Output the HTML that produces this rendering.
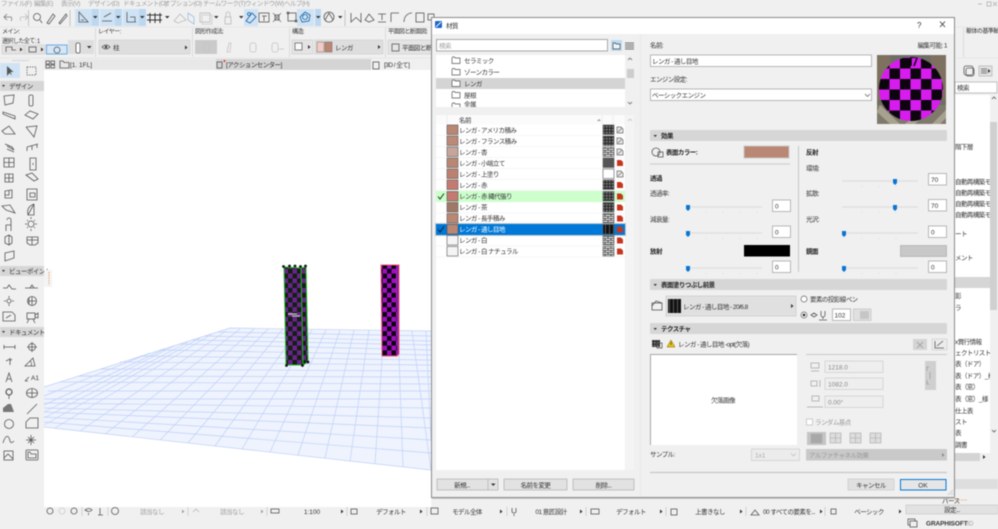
<!DOCTYPE html>
<html lang="ja"><head><meta charset="utf-8"><title>材質</title>
<style>
html,body{margin:0;padding:0;background:#f0f0f0;overflow:hidden}
svg{display:block;filter:blur(.4px)}
text{font-family:"Liberation Sans","Noto Sans CJK JP",sans-serif;font-size:6.5px;letter-spacing:-.55px;fill:#333}
.n{letter-spacing:0}
.b{font-weight:700;fill:#222}
.g{fill:#a0a0a0}
.i{fill:none;stroke:#555;stroke-width:.8}
.f{fill:#fff;stroke:#a8a8a8;stroke-width:.8}
.sl{stroke:#e0e0e0;stroke-width:1.6}
.th{fill:#0a74d4}
.sh{fill:#d6d6d6}
</style></head><body>
<svg width="998" height="529" viewBox="0 0 998 529" xmlns="http://www.w3.org/2000/svg">
<defs>
<pattern id="c1" width="9" height="9.600" patternUnits="userSpaceOnUse"><rect width="9" height="9.600" fill="#6b2290"/><rect width="4.500" height="4.800" fill="#12200f"/><rect x="4.500" y="4.800" width="4.500" height="4.800" fill="#12200f"/></pattern>
<pattern id="c2" width="9" height="9.600" patternUnits="userSpaceOnUse"><rect width="9" height="9.600" fill="#a010c0"/><rect width="4.500" height="4.800" fill="#0c0410"/><rect x="4.500" y="4.800" width="4.500" height="4.800" fill="#0c0410"/></pattern>
<pattern id="c3" width="21" height="21" patternUnits="userSpaceOnUse" patternTransform="translate(900 79)"><rect width="21" height="21" fill="#d81cf0"/><rect width="10.500" height="10.500" fill="#0c050e"/><rect x="10.500" y="10.500" width="10.500" height="10.500" fill="#0c050e"/></pattern>
<pattern id="d" width="3" height="3" patternUnits="userSpaceOnUse"><rect width="3" height="3" fill="#333"/><rect width="1.500" height="1.500" fill="#888"/></pattern>
<pattern id="br" width="6" height="4" patternUnits="userSpaceOnUse"><rect width="6" height="4" fill="#eee"/><path d="M0 .5H6M0 2.500H6M2 0V2M5 2V4" stroke="#333" stroke-width=".8"/></pattern>
<pattern id="th" width="4" height="11" patternUnits="userSpaceOnUse"><rect width="4" height="11" fill="#111"/><rect x="1" width="1" height="11" fill="#555"/></pattern>
<clipPath id="rp"><rect x="955" y="95" width="35" height="358"/></clipPath>
<g id="fo"><path d="M0 2V7H8V1.500H3.200L2.500 .5H.5L0 2Z" fill="#fff" stroke="#555" stroke-width=".7"/></g>
<g id="red"><path d="M0 0H4L6 2V6H0Z" fill="#c8351e"/></g>
<g id="gry"><path d="M0 0H4L6 2V6H0Z" fill="#e8e8e8" stroke="#666" stroke-width=".7"/><path d="M1 5L5 1" stroke="#666" stroke-width=".6"/></g>
<path id="ar" d="M0 0L2.500 2L0 4Z" fill="#333"/>
<path id="da" d="M0 0H4.500L2.250 2.500Z" fill="#333"/>
</defs>

<!-- app chrome -->
<rect width="998" height="529" fill="#f0f0f0"/>
<g>
<text x="1" y="5.500" class="g">ファイル(F)</text><text x="34" y="5.500" class="g">編集(E)</text><text x="61" y="5.500" class="g">表示(V)</text><text x="88" y="5.500" class="g">デザイン(D)</text><text x="123" y="5.500" class="g">ドキュメント(O)</text><text x="164" y="5.500" class="g">オプション(O)</text><text x="203" y="5.500" class="g">チームワーク(T)</text><text x="245" y="5.500" class="g">ウィンドウ(W)</text><text x="284" y="5.500" class="g">ヘルプ(H)</text>
<path d="M978 4H982M987 2H991V6H987ZM993 2L997 6M997 2L993 6" stroke="#aaa" stroke-width=".7" fill="none"/>
</g>

<!-- toolbar -->
<rect x="75" y="9" width="17" height="17" fill="#cfe3f5"/><rect x="92" y="9" width="7" height="17" fill="#bcd8f0"/>
<rect x="100" y="9" width="15" height="17" fill="#cfe3f5"/><rect x="115" y="9" width="7" height="17" fill="#bcd8f0"/>
<rect x="123" y="9" width="16" height="17" fill="#cfe3f5"/><rect x="139" y="9" width="7" height="17" fill="#bcd8f0"/>
<rect x="244" y="9" width="14" height="17" fill="#cfe3f5"/>
<rect x="297" y="9" width="17" height="17" fill="#cfe3f5"/><rect x="315" y="9" width="6" height="17" fill="#bcd8f0"/>
<g class="i">
<path d="M7 14L4 17L7 20M4 17H11A3 3 0 0 1 11 21" stroke="#777"/>
<path d="M25 14L28 17L25 20M28 17H21A3 3 0 0 0 21 21" stroke="#bbb"/>
<path d="M28.500 10V26M70 10V26M345 10V26" stroke="#bbb"/>
<circle cx="37" cy="17" r="3.500"/><path d="M40 20L42 23"/>
<path d="M47 23L53 14L55 16L49 24ZM59 23L66 14L67 16L60 24Z"/>
<path d="M79 22L79 12L88 22ZM81 20H84"/>
<path d="M102 21H112M104 17L111 13"/>
<path d="M127 12V22H136M130 17H135V22"/>
<path d="M150 13V23M155 13V23M160 13V23M147 15H162M147 20H162" stroke="#333" stroke-width="1"/>
<path d="M174 21L180 14L186 20L178 23Z" stroke="#bbb"/><path d="M188 13L194 17V24L188 20Z" stroke="#9bc0e5"/>
<rect x="200" y="13" width="10" height="9" stroke="#bbb"/><rect x="202" y="15" width="10" height="9" stroke="#ccc"/>
<rect x="225" y="17" width="6" height="7" stroke="#bbb"/><path d="M226 17V14A2 2 0 0 1 230 14V17" stroke="#bbb"/>
<path d="M246 21L252 13L256 17L250 23Z" stroke="#16609e"/><circle cx="249" cy="14" r="1.500" stroke="#16609e"/>
<rect x="259" y="13" width="10" height="9"/><path d="M262 16H267M264 16V21"/>
<path d="M273 13L281 22M281 13L273 22" stroke="#777"/><rect x="275" y="15" width="4" height="5"/>
<rect x="288" y="13" width="8" height="8"/><circle cx="288" cy="13" r="1"/><circle cx="296" cy="21" r="1"/>
<path d="M300 17L305 12L310 15L309 21L302 22Z" stroke="#16609e"/><circle cx="305" cy="17" r="2.500" stroke="#16609e"/>
<circle cx="329" cy="17" r="5"/><path d="M325 20L329 13L333 20"/>
<path d="M351 13V22L356 17.500L361 22V13" /><path d="M365 20L369 14L374 20L369 22Z"/>
<path d="M378 14H386M382 14V20M378 22H386"/><path d="M391 13H399M391 13V22"/><path d="M404 22C404 16 408 13 412 13"/><rect x="416" y="13" width="8" height="9"/><rect x="428" y="14" width="6" height="6"/>
</g>
<use href="#da" x="93" y="16"/><use href="#da" x="116" y="16"/><use href="#da" x="140" y="16"/><use href="#da" x="165" y="16"/><use href="#da" x="214" y="16"/><use href="#da" x="239" y="16"/><use href="#da" x="316" y="16"/><use href="#da" x="338" y="16"/>

<!-- info box -->
<rect x="0" y="27" width="998" height="31" fill="#f0f0f0"/>
<path d="M0 27H998M0 58H998" stroke="#e2e2e2" stroke-width=".8"/>
<path d="M95.500 28V57M192.500 28V57M289.500 28V57M385.500 28V57M963.500 28V57" stroke="#d8d8d8" stroke-width=".8"/>
<text x="2" y="33.500" style="font-size:6px">メイン:</text><text x="98" y="33.500" style="font-size:6px">レイヤー:</text><text x="195" y="33.500" style="font-size:6px">図形作成法:</text><text x="292" y="33.500" style="font-size:6px">構造:</text><text x="388" y="33.500" style="font-size:6px">平面図と断面図:</text><text x="966" y="33" style="font-size:6px">躯体の基準軸:</text>
<text x="2" y="43" style="font-size:6px">選択した全て: 1</text>
<rect x="2" y="45" width="22" height="9" fill="#e2e2e2" stroke="#ccc" stroke-width=".6"/><rect x="25" y="45" width="20" height="9" fill="#e2e2e2" stroke="#ccc" stroke-width=".6"/><rect x="46.500" y="45" width="20.500" height="9" fill="#d5e7f7" stroke="#3d8fd8" stroke-width=".7"/>
<rect x="68" y="40" width="26" height="14" fill="#dedede"/>
<g class="i"><path d="M6 52V47H12V50H16"/><rect x="29" y="47" width="7" height="5"/><circle cx="57" cy="50" r="3"/><rect x="76" y="43" width="4" height="10" rx="1.500" fill="#fff"/></g>
<use href="#ar" x="20" y="47.500"/><use href="#ar" x="41" y="47.500"/><use href="#da" x="87" y="46"/>
<rect x="99" y="40" width="91" height="14" fill="#dedede" stroke="#ccc" stroke-width=".6"/>
<path d="M102 47Q106 43 110 47Q106 51 102 47Z" class="i"/><circle cx="106" cy="47" r="1.200" fill="#333"/>
<text x="113" y="50">柱</text><use href="#ar" x="185" y="45.500"/>
<rect x="195" y="40" width="22" height="14" fill="#cacaca"/>
<g class="i" style="stroke:#c4c4c4"><rect x="204" y="43" width="5" height="9" rx="2"/><path d="M227 52L229 43H231L230 52Z"/><rect x="250" y="43" width="6" height="9" rx="2"/><rect x="272" y="43" width="6" height="9" rx="2"/><path d="M279 49H284"/></g>
<rect x="292" y="40" width="21" height="14" fill="#e4e4e4" stroke="#ccc" stroke-width=".6"/><rect x="295" y="43" width="7" height="7" fill="#fafafa" stroke="#555" stroke-width=".7"/><use href="#ar" x="308" y="45"/>
<rect x="315" y="40" width="68" height="14" fill="#dedede" stroke="#ccc" stroke-width=".6"/><rect x="317" y="42" width="7" height="10" fill="#f2cbc4" stroke="#555" stroke-width=".4"/><rect x="325" y="42" width="7" height="10" fill="#b98773" stroke="#555" stroke-width=".4"/><text x="335" y="50">レンガ</text><use href="#ar" x="378" y="45"/>
<rect x="388" y="40" width="50" height="14" fill="#e4e4e4" stroke="#ccc" stroke-width=".6"/><rect x="392" y="44" width="7" height="7" class="i"/><text x="402" y="50">平面図と断面</text>

<!-- view tabs -->
<rect x="44" y="59" width="172" height="11" fill="#e8e8e8"/><rect x="216" y="59" width="155" height="11" fill="#d4d4d4"/><rect x="371" y="59" width="60" height="11" fill="#f0f0f0"/>
<g class="i"><rect x="46" y="61" width="3.500" height="3"/><rect x="51" y="61" width="3.500" height="3"/><rect x="46" y="65" width="3.500" height="3"/><rect x="51" y="65" width="3.500" height="3"/><path d="M60 68V61H63L64 62.500H69V68Z"/><rect x="217" y="62" width="5" height="6"/><rect x="373" y="62" width="6" height="7"/></g>
<circle cx="224.500" cy="61" r="1" fill="#e03020"/>
<text x="70" y="67" class="n">[1. 1FL]</text><text x="226" y="67">[アクションセンター]</text><text x="384" y="67">[3D / 全て]</text>

<!-- canvas -->
<rect x="44" y="70" width="387" height="437" fill="#fff"/>
<polygon points="44,387 230,328 431,331 431,470 44,427" fill="#eef3fe"/>
<g stroke="#bfd0f6" stroke-width=".7" fill="none">
<path d="M44 387L230 328L431 331M44 427L431 470M44 422L431 453M44 417L431 440M44 412L431 428M44 408L431 418M44 403L431 408M44 399L431 399M48 391L431 391M60 382L431 384M78 376L431 377M100 369L431 371M120 362L431 365M140 356L431 360M160 350L431 355M180 344L431 350M192 340L431 345M205 336L431 341M218 332L431 336"/>
<path d="M44 396L150 353M44 405L165 349M44 412L176 345M44 418L188 342M44 425L200 338M55 428L212 334M80 431L226 331M105 434L240 329M132 437L254 329M160 440L268 329M188 443L283 329M215 446L298 330M242 449L312 330M270 452L326 330M298 455L340 330M325 458L354 330M350 461L369 330M375 464L384 330M403 467L398 330M431 470L412 331M431 440L426 331"/>
</g>

<!-- left column -->
<polygon points="284,267 301,268 303,365 286,365" fill="url(#c1)"/>
<polygon points="301,268 306,267 308,362 303,365" fill="url(#c1)"/>
<path d="M284 267L301 268L303 365L286 365ZM301 268L306 267L308 362L303 365" fill="none" stroke="#18c018" stroke-width="1"/>
<g fill="#111"><circle cx="283.500" cy="266.500" r="1.400"/><circle cx="289.500" cy="266" r="1.400"/><circle cx="295" cy="266" r="1.400"/><circle cx="300.500" cy="266.500" r="1.400"/><circle cx="305.500" cy="266" r="1.400"/><circle cx="286.500" cy="365.500" r="1.400"/><circle cx="302.500" cy="365.500" r="1.400"/><circle cx="308" cy="362" r="1.400"/></g>
<path d="M288 314H297M292 316H300" stroke="#ccc" stroke-width="1.200"/>
<!-- right column -->
<polygon points="381,265 396,265 397,356 382,356" fill="url(#c2)"/>
<polygon points="396,265 399,265 399,354 397,356" fill="#901aa8"/>
<path d="M381 265L399 265L399 354L397 356L382 356Z" fill="none" stroke="#f05468" stroke-width=".9"/>

<!-- left toolbox -->
<rect x="0" y="59" width="44" height="448" fill="#f0f0f0"/>
<path d="M12 60.500H29" stroke="#ccc" stroke-width=".8"/>
<rect x="0" y="63" width="20" height="15" fill="#cfe3f5"/>
<path d="M7 66L7 76L9.500 73L12 75.500L10.500 72H13.500Z" fill="#555"/>
<rect x="27" y="67" width="9" height="8" fill="none" stroke="#555" stroke-width=".7" stroke-dasharray="1.500 1"/>
<rect x="0" y="81" width="44" height="10" class="sh"/><path d="M2 85H5L3.500 87Z" fill="#333"/><text x="9" y="88.500">デザイン</text>
<rect x="0" y="266" width="44" height="10" class="sh"/><path d="M2 270H5L3.500 272Z" fill="#333"/><text x="9" y="273.500">ビューポイント</text>
<rect x="0" y="327" width="44" height="10" class="sh"/><path d="M2 331H5L3.500 333Z" fill="#333"/><text x="9" y="334.500">ドキュメント</text>
<rect x="44" y="270" width="8" height="17" fill="#f4f4f4"/><path d="M49 272V285" stroke="#e8a060" stroke-width=".9" stroke-dasharray="1.500 1"/>
<g class="i">
<path d="M4 96L14 95L13 103L5 105Z"/><rect x="29" y="95" width="4" height="11" rx="1.500"/>
<path d="M3 112L15 116V119L3 114Z"/><path d="M25 115L30 111L38 114L33 119Z"/>
<path d="M2 131L9 126L15 134L5 134Z"/><path d="M26 127L37 126L34 137L30 132L26 127"/>
<path d="M5 144L12 147L14 150L7 146M7 149L14 152"/><path d="M27 147L38 144M27 151V147M32 150V146M37 148V144"/>
<path d="M4 158H14V167H4ZM9 158V167M4 162.500H14"/><path d="M30 158H36V170H30ZM33 163V165"/>
<path d="M5 174H13V182H5ZM9 174V182M5 178H13"/><path d="M26 175L32 173L38 179L34 181L30 178Z"/>
<path d="M5 191L12 190V198L5 198ZM9 190V195H5"/><path d="M27 189H37V200H27ZM30 193H35V197H30Z"/>
<path d="M2 206L10 205L15 213L6 210Z"/><path d="M28 215L34 204V215ZM28 215Q26 207 34 204"/>
<path d="M7 220A2 2 0 0 1 11 220V225H6V231M11 225V231"/><circle cx="31" cy="224" r="3"/><path d="M31 217V219M31 229V231M25 224H27M35 224H37M27 220L28 221M34 227L35 228M27 228L28 227M34 221L35 220"/>
<path d="M5 237L9 235L12 237V243L9 245L5 243ZM9 235V245"/><path d="M27 237H38V243L35 245H30L27 243ZM27 240H38M32 237V245"/>
<path d="M5 253L14 251V258L5 261Z"/>
<path d="M3 288H7L9 285L12 289H16" /><path d="M25 288H38M30 288L32 285L34 288"/>
<circle cx="9" cy="301" r="2"/><path d="M9 296V298M9 304V306M4 301H6M12 301H14"/><circle cx="32" cy="301" r="4.500"/><path d="M29 298V304M32 297V305M28 301H36"/>
<path d="M3 312H12L15 315V321H3ZM6 318L11 315"/><rect x="27" y="313" width="8" height="6"/><path d="M35 315L38 313V318L35 317M29 319L27 323M33 319L35 323"/>
<path d="M4 347H15M4 345V349M15 345V349"/><circle cx="32" cy="347" r="3.500"/><path d="M27 347H37M32 342V352"/>
<path d="M6 361L10 359M10 365V358M10 361L12 359"/><path d="M25 366L33 358L35 366ZM31 366A4 4 0 0 0 30 361"/>
<path d="M6 382L9 373L12 382M7 379H11"/><path d="M25 381L29 377M25 381H28"/>
<circle cx="9" cy="392" r="3" stroke-width="1.200"/><path d="M9 395V399"/><ellipse cx="32" cy="393" rx="5.500" ry="4.500"/><path d="M27 393H37M32 389V398"/>
<path d="M27 414L37 404"/><circle cx="9" cy="424" r="4.500"/><path d="M26 428V422L30 418H38V428Z"/>
<path d="M3 443C6 433 9 436 10 441C11 444 13 442 14 441"/><path d="M31 435V445M26 440H36M28 437L34 443M34 437L28 443"/>
<rect x="4" y="451" width="9" height="9"/><path d="M4 458L8 454L13 459"/><rect x="26" y="450" width="12" height="10" rx="1"/><path d="M28 458H36V454H31L30 452H28Z"/>
</g>
<path d="M3 414V408L8 404H11L14 412H3Z" fill="#777"/>
<text x="31" y="380" class="n">A1</text>

<!-- nav bar -->
<rect x="44" y="507" width="862" height="9" fill="#f0f0f0"/>
<g class="i">
<circle cx="50" cy="511" r="3"/><circle cx="62" cy="511" r="3" stroke="#ccc"/><circle cx="74" cy="511" r="3"/>
<path d="M82 507V516M108 507V516" stroke="#ccc"/>
<path d="M85 510Q89 507 92 510Q89 513 85 510ZM88.500 513V515M100 508V515M98 515H103"/><circle cx="115" cy="511" r="3.500"/>
<path d="M188 507V516M267 507V516M347 507V516M427 507V516M507 507V516M586 507V516M666 507V516M746 507V516M825 507V516" stroke="#ccc"/>
<path d="M193 512L196 509L199 512" stroke="#bbb"/><rect x="271" y="509" width="8" height="4"/><rect x="351" y="509" width="6" height="5"/><rect x="431" y="508" width="7" height="6"/>
<path d="M512 508V512A2.500 2.500 0 0 0 516 512V508M514 514V516"/><rect x="591" y="509" width="8" height="5"/><rect x="671" y="509" width="6" height="6"/><path d="M751 515L755 510L759 515Z"/><rect x="831" y="509" width="5" height="5"/>
</g>
<g style="text-anchor:middle"><text x="152" y="514" class="g">該当なし</text><text x="232" y="514" class="g">該当なし</text><text x="312" y="514" class="n">1:100</text><text x="391" y="514">デフォルト</text><text x="467" y="514">モデル全体</text><text x="551" y="514">01 意匠設計</text><text x="631" y="514">デフォルト</text><text x="710" y="514">上書きなし</text><text x="789" y="514">00 すべての要素を...</text><text x="869" y="514">ベーシック</text></g>
<g><use href="#ar" x="182" y="509.500" opacity=".4"/><use href="#ar" x="261" y="509.500" opacity=".4"/><use href="#ar" x="341" y="509.500"/><use href="#ar" x="420" y="509.500"/><use href="#ar" x="500" y="509.500"/><use href="#ar" x="580" y="509.500"/><use href="#ar" x="660" y="509.500"/><use href="#ar" x="740" y="509.500"/><use href="#ar" x="820" y="509.500"/><use href="#ar" x="899" y="509.500"/></g>
<path d="M955 500H968" stroke="#e8a060" stroke-width=".7" stroke-dasharray="2 1.200"/>

<!-- bottom right -->
<text x="942" y="503">パース</text>
<rect x="906" y="505" width="92" height="9" fill="#e2e2e2" stroke="#c8c8c8" stroke-width=".7"/><text x="952" y="512" style="text-anchor:middle">設定...</text>
<rect x="908" y="519" width="7" height="6" fill="none" stroke="#444" stroke-width=".7"/><rect x="910" y="521" width="7" height="6" fill="#f0f0f0" stroke="#444" stroke-width=".7"/>
<text x="926" y="525.500" class="n" style="font-weight:700;font-size:6.500px;letter-spacing:-.1px">GRAPHISOFT</text><text x="967" y="525.500" class="g n">ID</text>

<!-- right panel -->
<rect x="955" y="82" width="42" height="11" fill="#fff" stroke="#aaa" stroke-width=".7"/><text x="957" y="90">検索</text>
<rect x="979" y="66" width="13" height="10" fill="#e2e2e2" stroke="#aaa" stroke-width=".6"/><path d="M981 69H987M981 71H987M981 73H987" stroke="#555" stroke-width=".7"/><use href="#ar" x="988" y="69"/>
<rect x="964" y="66" width="9" height="9" rx="2" class="i"/><rect x="966" y="68" width="8" height="8" rx="2" class="i"/>
<rect x="955" y="95" width="35" height="358" fill="#fff"/>
<rect x="955" y="277" width="35" height="11" class="sh"/>
<rect x="955" y="453" width="25" height="8" fill="#d4d4d4"/><use href="#ar" x="983" y="455"/>
<rect x="955" y="479" width="43" height="10" fill="#dedede"/>
<g clip-path="url(#rp)">
<text x="955" y="149">階下層</text><text x="955" y="184">自動再構築モ</text><text x="955" y="195">自動再構築モ</text><text x="955" y="206">自動再構築モ</text><text x="955" y="217">自動再構築モ</text><text x="955" y="236">ート</text><text x="955" y="260">メント</text><text x="955" y="298">影</text><text x="955" y="310">ラ</text><text x="955" y="344">x賞行情報</text><text x="955" y="355">ェクトリスト</text><text x="955" y="366">表（ドア）</text><text x="955" y="378">表（ドア）_様</text><text x="955" y="389">表（窓）</text><text x="955" y="401">表（窓）_様</text><text x="955" y="413">仕上表</text><text x="955" y="424">スト</text><text x="955" y="435">表</text><text x="955" y="447">調書</text>
</g>
<rect x="990" y="122" width="7" height="188" fill="#d0d0d0"/><path d="M992 99L994 97L996 99M992 430L994 432L996 430" class="i"/>

<!-- DIALOG -->
<rect x="431.500" y="17.500" width="523" height="480" fill="#f0f0f0" stroke="#8a8a8a"/>
<rect x="432" y="18" width="522" height="16" fill="#fff"/>
<rect x="435" y="21" width="7" height="7" rx="1" fill="#1b66c9"/><path d="M436 27L441 22" stroke="#fff" stroke-width=".9"/>
<text x="446" y="28">材質</text>
<text x="917" y="28" style="font-size:8px">?</text><path d="M940 21.500L945 27M945 21.500L940 27" stroke="#333" stroke-width=".8"/>
<path d="M954.500 497V498M432 498.500H955" stroke="#bbb" stroke-width=".8"/>

<!-- folder search -->
<rect x="436.500" y="39.500" width="171" height="11.500" fill="#fff" stroke="#a8a8a8"/><text x="439" y="48" class="g">検索</text>
<rect x="611" y="40" width="11" height="11" fill="#bcdcf5"/><path d="M613 49V43H615.500L616 44H620V49Z" fill="#eaf4fc" stroke="#444" stroke-width=".7"/>
<path d="M625 43H634M625 45H634M625 47H634M625 49H634" stroke="#444" stroke-width=".8"/>

<rect x="436" y="55" width="189" height="52" fill="#fff"/>
<rect x="436" y="78" width="189" height="11" fill="#d4d4d4"/>
<use href="#fo" x="452" y="56.500"/><use href="#fo" x="452" y="68"/><use href="#fo" x="452" y="79.500"/><use href="#fo" x="452" y="91"/><use href="#fo" x="452" y="102.500"/>
<text x="464" y="63">セラミック</text><text x="464" y="74.500">ゾーンカラー</text><text x="464" y="86">レンガ</text><text x="464" y="97.500">屋根</text><text x="464" y="106.500">金属</text>
<rect x="627" y="69" width="7" height="9" fill="#cdcdcd"/><path d="M628 60L630 58L632 60M628 102L630 104L632 102" stroke="#555" stroke-width=".7" fill="none"/>
<rect x="432" y="107" width="208" height="8" fill="#f0f0f0"/>

<!-- materials list -->
<rect x="436" y="115" width="189" height="355" fill="#fff"/>
<rect x="436" y="115" width="189" height="9.500" fill="#fbfbfb"/>
<path d="M447 115V124M602 115V124M613 115V124" stroke="#e4e4e4" stroke-width=".6"/>
<text x="459" y="122.500">名前</text><path d="M597 121H601L599 119Z" fill="#999"/>
<rect x="436" y="191" width="189" height="11" fill="#ccffcc"/>
<rect x="436" y="224" width="189" height="11" fill="#0078d7"/>
<rect x="435.500" y="223.500" width="190" height="12" fill="none" stroke="#aaa" stroke-width=".6"/>
<path d="M436 135.500H625M436 146.500H625M436 157.500H625M436 168.500H625M436 179.500H625M436 190.500H625M436 213H625M436 246H625M436 257H625" stroke="#eee" stroke-width=".6"/>
<g stroke="#555" stroke-width=".6">
<rect x="447" y="125" width="11" height="9.500" fill="#b98773"/><rect x="447" y="136" width="11" height="9.500" fill="#bc8a78"/><rect x="447" y="147" width="11" height="9.500" fill="#c6a69c"/><rect x="447" y="158" width="11" height="9.500" fill="#b98773"/><rect x="447" y="169" width="11" height="9.500" fill="#bc8270"/><rect x="447" y="180" width="11" height="9.500" fill="#c47a70"/><rect x="447" y="191.500" width="11" height="9.500" fill="#c47a70"/><rect x="447" y="202.500" width="11" height="9.500" fill="#a07868"/><rect x="447" y="213.500" width="11" height="9.500" fill="#b98773"/><rect x="447" y="224.500" width="11" height="9.500" fill="#b98773"/><rect x="447" y="235.500" width="11" height="9.500" fill="#f4f4f4"/><rect x="447" y="246.500" width="11" height="9.500" fill="#f4f4f4"/>
<rect x="603" y="125" width="11" height="9.500" fill="url(#d)"/><rect x="603" y="136" width="11" height="9.500" fill="url(#d)"/><rect x="603" y="147" width="11" height="9.500" fill="url(#br)"/><rect x="603" y="158" width="11" height="9.500" fill="#555"/><rect x="603" y="169" width="11" height="9.500" fill="#fff"/><rect x="603" y="180" width="11" height="9.500" fill="url(#d)"/><rect x="603" y="191.500" width="11" height="9.500" fill="url(#d)"/><rect x="603" y="202.500" width="11" height="9.500" fill="url(#d)"/><rect x="603" y="213.500" width="11" height="9.500" fill="url(#br)"/><rect x="603" y="224.500" width="11" height="9.500" fill="url(#th)"/><rect x="603" y="235.500" width="11" height="9.500" fill="url(#br)"/><rect x="603" y="246.500" width="11" height="9.500" fill="url(#br)"/>
</g>
<use href="#gry" x="617" y="127"/><use href="#gry" x="617" y="138"/><use href="#gry" x="617" y="149"/><use href="#red" x="617" y="160"/><use href="#gry" x="617" y="171"/><use href="#red" x="617" y="182"/><use href="#red" x="617" y="193.500"/><use href="#red" x="617" y="204.500"/><use href="#red" x="617" y="215.500"/><use href="#red" x="617" y="226.500"/><use href="#red" x="617" y="237.500"/><use href="#red" x="617" y="248.500"/>
<text x="459" y="132.500">レンガ - アメリカ積み</text><text x="459" y="143.500">レンガ - フランス積み</text><text x="459" y="154.500">レンガ - 杏</text><text x="459" y="165.500">レンガ - 小端立て</text><text x="459" y="176.500">レンガ - 上塗り</text><text x="459" y="187.500">レンガ - 赤</text><text x="459" y="198.500">レンガ - 赤 縄代張り</text><text x="459" y="209.500">レンガ - 茶</text><text x="459" y="220.500">レンガ - 長手積み</text><text x="459" y="231.500" style="fill:#fff">レンガ - 通し目地</text><text x="459" y="242.500">レンガ - 白</text><text x="459" y="253.500">レンガ - 白 ナチュラル</text>
<path d="M438 196.500L440 199L444 193.500" fill="none" stroke="#1a3a1a" stroke-width="1"/><path d="M438 229.500L440 232L444 226.500" fill="none" stroke="#0b1f33" stroke-width="1"/>
<rect x="626" y="115" width="8" height="355" fill="#f4f4f4"/><path d="M628 121L630 119L632 121" stroke="#bbb" stroke-width=".7" fill="none"/>

<!-- left buttons -->
<rect x="437" y="479" width="61" height="11" fill="#e2e2e2" stroke="#b0b0b0" stroke-width=".7"/><path d="M488 479V490" stroke="#b0b0b0" stroke-width=".7"/><text x="462" y="487.500" style="text-anchor:middle">新規...</text><use href="#da" x="491" y="483.500"/>
<rect x="504" y="479" width="63" height="11" fill="#e2e2e2" stroke="#b0b0b0" stroke-width=".7"/><text x="535.500" y="487.500" style="text-anchor:middle">名前を変更</text>
<rect x="573" y="479" width="61" height="11" fill="#e2e2e2" stroke="#b0b0b0" stroke-width=".7"/><text x="603.500" y="487.500" style="text-anchor:middle">削除...</text>
<path d="M640.500 34V497" stroke="#e4e4e4" stroke-width=".6"/>

<!-- right pane: header -->
<text x="650" y="47.500">名前:</text><text x="947" y="47.500" style="text-anchor:end">編集可能: 1</text>
<rect x="650.500" y="55" width="221" height="11.500" class="f"/><text x="652" y="63.500">レンガ - 通し目地</text>
<text x="650" y="81.500">エンジン設定:</text>
<rect x="650.500" y="89" width="221" height="11.500" class="f"/><text x="652" y="97.500">ベーシックエンジン</text><path d="M865 94L867.500 96.500L870 94" fill="none" stroke="#555" stroke-width=".7"/>

<!-- preview -->
<rect x="877" y="55" width="69" height="69" fill="#6f6d66"/>
<path d="M877 55H890L895 100H877Z" fill="#85745c" opacity=".7"/><path d="M930 55H946V100H935Z" fill="#85745c" opacity=".7"/>
<rect x="877" y="105" width="69" height="19" fill="#7f7a6c"/><path d="M877 112L890 124H900L880 105ZM905 124L925 105H935L915 124ZM932 124L946 110V118L940 124Z" fill="#b2ab98" opacity=".8"/>
<circle cx="911" cy="89" r="32" fill="url(#c3)"/>
<path d="M905 58L908 66M917 58L914 66M911 57V66" stroke="#0c050e" stroke-width="1.500" fill="none"/>

<!-- section: 効果 -->
<rect x="650" y="130" width="297" height="11" rx="1" class="sh"/><path d="M653.500 135H657L655.250 137Z" fill="#333"/><text x="661" y="138" class="b">効果</text>
<circle cx="656" cy="152" r="4" class="i"/><rect x="658" y="152" width="5" height="5" class="i"/>
<text x="666" y="154.500" class="b">表面カラー:</text>
<rect x="744" y="146" width="45" height="12" fill="#b98773" stroke="#c8c8c8"/>
<text x="806" y="154.500" class="b">反射</text>
<path d="M798.500 146V272" stroke="#bbb" stroke-width=".8"/><path d="M650 164H790" stroke="#d0d0d0" stroke-width="1.300"/>
<text x="650" y="180.500" class="b">透過</text><text x="650" y="195.500">透過率:</text><text x="650" y="221.500">減衰量:</text><text x="650" y="253.500" class="b">放射</text>
<text x="806" y="170.500">環境:</text><text x="806" y="195.500">拡散:</text><text x="806" y="221.500">光沢:</text><text x="806" y="253.500" class="b">鏡面</text>
<rect x="744" y="245" width="46" height="11.500" fill="#000"/><rect x="900.500" y="245.500" width="46" height="11" fill="#c8c8c8" stroke="#aaa" stroke-width=".7"/>
<path class="sl" d="M686 207H762M686 233H762M686 268H762M842 181H918M842 207H918M842 233H918M842 268H918"/>
<path d="M706 212V213M723 212V213M740 212V213M757 212V213M706 238V239M723 238V239M740 238V239M757 238V239M706 273V274M723 273V274M740 273V274M757 273V274M862 186V187M879 186V187M896 186V187M862 212V213M879 212V213M896 212V213M862 238V239M879 238V239M896 238V239M862 273V274M879 273V274M896 273V274" stroke="#c8c8c8" stroke-width=".6"/>
<g class="th"><path d="M686 205H690V209L688 211L686 209Z"/><path d="M686 231H690V235L688 237L686 235Z"/><path d="M686 266H690V270L688 272L686 270Z"/><path d="M893 179H897V183L895 185L893 183Z"/><path d="M893 205H897V209L895 211L893 209Z"/><path d="M842 231H846V235L844 237L842 235Z"/><path d="M842 266H846V270L844 272L842 270Z"/></g>
<g class="f"><rect x="772.500" y="200" width="18" height="11.500"/><rect x="772.500" y="226" width="18" height="11.500"/><rect x="772.500" y="261" width="18" height="11.500"/><rect x="928.500" y="173.500" width="18" height="11.500"/><rect x="928.500" y="199.500" width="18" height="11.500"/><rect x="928.500" y="226" width="18" height="11.500"/><rect x="928.500" y="261" width="18" height="11.500"/></g>
<g class="n"><text x="775" y="208.500" class="n">0</text><text x="775" y="234.500" class="n">0</text><text x="775" y="269.500" class="n">0</text><text x="931" y="182" class="n">70</text><text x="931" y="208" class="n">70</text><text x="931" y="234.500" class="n">0</text><text x="931" y="269.500" class="n">0</text></g>

<!-- section: 表面塗りつぶし前景 -->
<rect x="650" y="279" width="297" height="11" rx="1" class="sh"/><path d="M653.500 284H657L655.250 286Z" fill="#333"/><text x="661" y="287" class="b">表面塗りつぶし前景</text>
<rect x="652" y="303" width="10" height="7" class="i"/><path d="M652 306L656 301L662 303" class="i"/>
<rect x="666" y="296" width="130" height="20" fill="#e0e0e0" stroke="#c8c8c8" stroke-width=".7"/>
<rect x="668" y="299" width="13" height="14" fill="url(#th)"/><text x="683" y="309">レンガ - 通し目地 - 20/6.8</text><use href="#ar" x="791" y="304"/>
<circle cx="804" cy="299" r="3" fill="#fff" stroke="#666" stroke-width=".7"/><text x="810" y="301.500">要素の投影線ペン</text>
<circle cx="804" cy="315" r="3" fill="#fff" stroke="#666" stroke-width=".7"/><circle cx="804" cy="315" r="1.400" fill="#333"/>
<path d="M811 315L814 313L817 315L814 317ZM821 311V315A2 2 0 0 0 825 315V311M823 317V319M819 320H827" class="i"/>
<rect x="832.500" y="309" width="18" height="11.500" class="f"/><text x="834.500" y="317.500" class="n">102</text>
<rect x="853.500" y="309" width="17.500" height="11.500" fill="#e0e0e0" stroke="#c0c0c0" stroke-width=".7"/><rect x="860" y="311" width="9" height="8" fill="#c6c6c6"/>

<!-- section: テクスチャ -->
<rect x="650" y="323" width="297" height="11" rx="1" class="sh"/><path d="M653.500 328H657L655.250 330Z" fill="#333"/><text x="661" y="331" class="b">テクスチャ</text>
<rect x="652" y="340" width="8" height="7" fill="url(#d)"/><rect x="657" y="343" width="5" height="5" class="i"/>
<path d="M671 340L675 347H667Z" fill="#f1c40f" stroke="#6b5a00" stroke-width=".5"/><path d="M671 342V345" stroke="#333" stroke-width=".7"/>
<text x="678" y="346.500">レンガ - 通し目地 -opt(欠落)</text>
<rect x="913" y="339" width="14" height="11" fill="#d4d4d4"/><path d="M917 342L923 348M923 342L917 348" stroke="#999" stroke-width=".8"/>
<rect x="932" y="339" width="15" height="11" fill="#ececec" stroke="#ccc" stroke-width=".6"/><path d="M935 341V348H944M937 346L943 341" class="i"/>
<path d="M806 354.500H947" stroke="#c8c8c8"/>
<rect x="650" y="354" width="147" height="91" fill="#fff"/><path d="M650.500 445V354.500H797" fill="none" stroke="#a8a8a8"/>
<text x="723" y="402.500" style="text-anchor:middle">欠落画像</text>
<g class="i" style="stroke:#aaa"><rect x="811" y="363" width="8" height="5"/><path d="M811 371H819"/><rect x="811" y="381" width="6" height="5"/><path d="M820 380V387"/><rect x="812" y="396" width="7" height="5"/><path d="M807 407H823"/></g>
<g fill="#eee" stroke="#ccc" stroke-width=".7"><rect x="825" y="361" width="58" height="11.500"/><rect x="825" y="378" width="58" height="11.500"/><rect x="825" y="396" width="58" height="11.500"/></g>
<text x="828" y="369.500" class="n" style="fill:#888">1218.0</text><text x="828" y="386.500" class="n" style="fill:#888">1082.0</text><text x="828" y="404.500" class="n" style="fill:#888">0.00°</text>
<rect x="925" y="361" width="11" height="29" fill="#cfcfcf"/><path d="M929 367H927V371M929 384H927V380M930 372V379" stroke="#999" stroke-width=".7" fill="none"/>
<rect x="806.500" y="419" width="6" height="6" fill="#fff" stroke="#bbb" stroke-width=".7"/><text x="815" y="424.500" style="fill:#999">ランダム基点</text>
<rect x="807" y="432" width="19" height="13" fill="#c4c4c4"/>
<g fill="#ddd" stroke="#aaa" stroke-width=".6"><rect x="811" y="434" width="11" height="9" fill="#a8a8a8"/><rect x="830" y="433" width="11" height="10"/><rect x="850" y="433" width="11" height="10"/><rect x="870" y="433" width="11" height="10"/></g>
<path d="M830 438H841M835.500 433V443M850 438H861M855.500 433V443M870 438H881M875.500 433V443" stroke="#aaa" stroke-width=".6"/>
<text x="650" y="456.500">サンプル:</text>
<rect x="751.500" y="449" width="48" height="11.500" fill="#ececec" stroke="#ccc" stroke-width=".7"/><text x="755" y="457.500" class="n" style="fill:#aaa">1x1</text><path d="M791 453.500L793.500 456L796 453.500" stroke="#bbb" stroke-width=".7" fill="none"/>
<rect x="806" y="449" width="141" height="11.500" fill="#c9c9c9"/><text x="809" y="457.500" style="fill:#999">アルファチャネル効果</text><use href="#ar" x="942" y="453" opacity=".4"/>
<path d="M650 472.500H947" stroke="#c8c8c8" stroke-width="1.200"/>
<rect x="848" y="479" width="46" height="11" fill="#e0e0e0" stroke="#c8c8c8" stroke-width=".7"/><text x="871" y="487.500" style="text-anchor:middle">キャンセル</text>
<rect x="900.500" y="479.500" width="45.500" height="10.500" fill="#e6e6e6" stroke="#0078d7" stroke-width="1"/><text x="923" y="487.500" class="n" style="text-anchor:middle">OK</text>
<path d="M948 495L953 490M951 495L953 493" stroke="#bbb" stroke-width=".6"/>
</svg>
</body></html>
